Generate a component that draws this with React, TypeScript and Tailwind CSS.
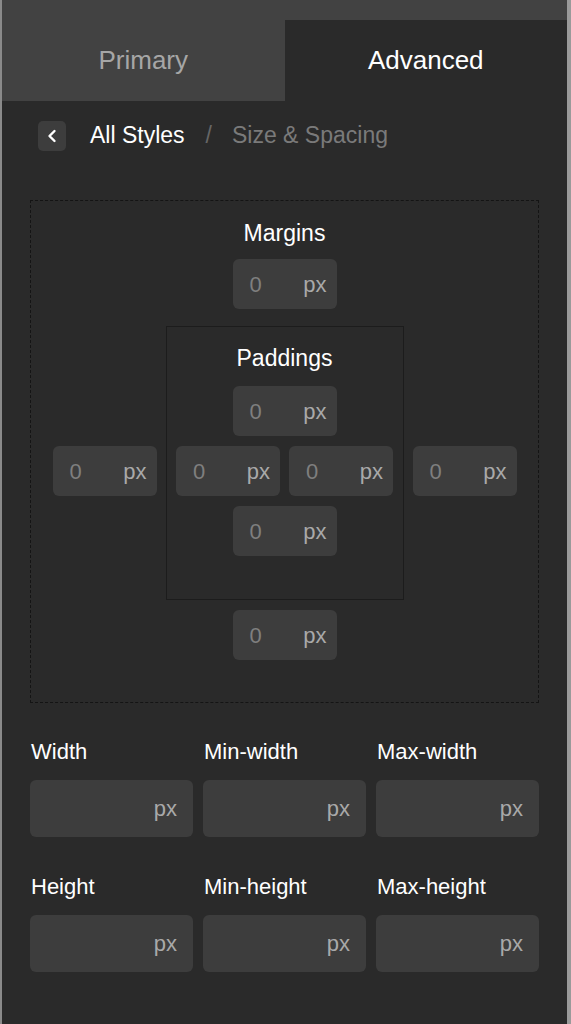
import React from 'react';

const font = { fontFamily: '"Liberation Sans", Arial, Helvetica, sans-serif' };

function SpaceInput({ value = '0' }: { value?: string }) {
  return (
    <div className="flex h-[50px] w-[104px] items-center justify-between rounded-[6px] bg-[#3d3d3d] pl-[17px] pr-[10px] text-[22px]">
      <span className="text-[#7f7f7f]">{value}</span>
      <span className="text-[#a9a9a9]">px</span>
    </div>
  );
}

function SizeField({ label }: { label: string }) {
  return (
    <div className="flex flex-col">
      <div className="pl-[1px] text-[22px] leading-[26px] text-white">{label}</div>
      <div className="mt-[15px] flex h-[57px] items-center justify-end rounded-[6px] bg-[#3d3d3d] pr-[16px] text-[22px] text-[#a9a9a9]">
        px
      </div>
    </div>
  );
}

export default function App() {
  return (
    <div
      className="flex h-[1024px] w-[571px] flex-col overflow-hidden border-l-2 border-r-4 border-l-[#8a8a8a] border-r-[#9a9a9a] bg-[#2a2a2a]"
      style={font}
    >
      {/* tabs */}
      <div className="h-[20px] bg-[#424242]" />
      <div className="flex h-[81px]">
        <div className="flex flex-1 items-center justify-center bg-[#424242] text-[26px] text-[#a6a6a6]">
          Primary
        </div>
        <div className="flex flex-1 items-center justify-center bg-[#2a2a2a] text-[26px] text-white">
          Advanced
        </div>
      </div>

      {/* breadcrumb */}
      <div className="mt-[19px] flex h-[31px] items-center px-[36px] text-[23px]">
        <button className="flex h-[30px] w-[28px] items-center justify-center rounded-[5px] bg-[#3d3d3d]">
          <svg width="10" height="14" viewBox="0 0 10 14" fill="none">
            <path d="M7.5 2 L2.5 7 L7.5 12" stroke="white" strokeWidth="2.4" strokeLinecap="round" strokeLinejoin="round" />
          </svg>
        </button>
        <span className="ml-[24px] text-white">All Styles</span>
        <span className="ml-[21px] text-[#666666]">/</span>
        <span className="ml-[20px] text-[#7a7a7a]">Size &amp; Spacing</span>
      </div>

      <div className="flex flex-col px-[28px]">
        {/* margins & paddings */}
        <div className="mt-[49px] flex flex-col items-center border border-dashed border-[#141414] pb-[42px] pt-[19px]">
          <div className="text-[23px] leading-[26px] text-white">Margins</div>
          <div className="mt-[13px]">
            <SpaceInput />
          </div>
          <div className="mt-[17px] flex items-start gap-[9px]">
            <div className="mt-[120px]">
              <SpaceInput />
            </div>
            <div className="flex w-[238px] flex-col items-center border border-[#1c1c1c] pb-[43px] pt-[18px]">
              <div className="text-[23px] leading-[26px] text-white">Paddings</div>
              <div className="mt-[15px]">
                <SpaceInput />
              </div>
              <div className="mt-[10px] flex gap-[9px]">
                <SpaceInput />
                <SpaceInput />
              </div>
              <div className="mt-[10px]">
                <SpaceInput />
              </div>
            </div>
            <div className="mt-[120px]">
              <SpaceInput />
            </div>
          </div>
          <div className="mt-[10px]">
            <SpaceInput />
          </div>
        </div>

        {/* sizes */}
        <div className="mt-[36px] grid grid-cols-3 gap-x-[10px]">
          <SizeField label="Width" />
          <SizeField label="Min-width" />
          <SizeField label="Max-width" />
        </div>
        <div className="mt-[37px] grid grid-cols-3 gap-x-[10px]">
          <SizeField label="Height" />
          <SizeField label="Min-height" />
          <SizeField label="Max-height" />
        </div>
      </div>
    </div>
  );
}
